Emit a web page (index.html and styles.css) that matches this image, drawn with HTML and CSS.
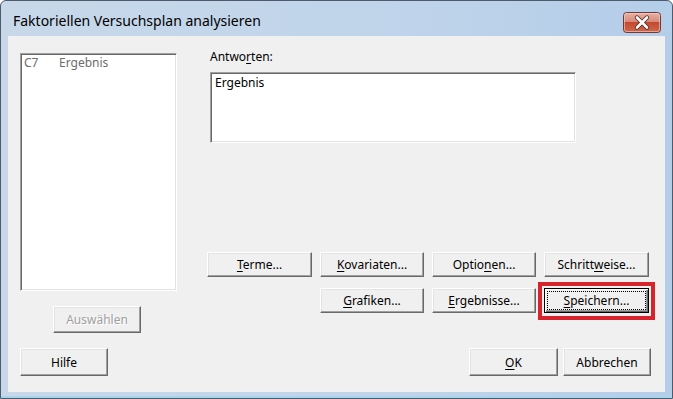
FILE: index.html
```html
<!DOCTYPE html>
<html lang="de">
<head>
    <meta charset="UTF-8">
    <title>Faktoriellen Versuchsplan analysieren</title>
    <link rel="stylesheet" href="styles.css">
</head>
<body>
    <div class="window">
        <div class="titlebar">
            <span class="title">Faktoriellen Versuchsplan analysieren</span>
            <span class="close-btn">
                <svg width="38" height="21" viewBox="0 0 38 21">
                    <defs>
                        <linearGradient id="closeGrad" x1="0" y1="0" x2="0" y2="1">
                            <stop offset="0" stop-color="#e8b3a8"/>
                            <stop offset="0.45" stop-color="#d68b7a"/>
                            <stop offset="0.5" stop-color="#c4492f"/>
                            <stop offset="1" stop-color="#cf6a4e"/>
                        </linearGradient>
                    </defs>
                    <rect x="0.5" y="0.5" width="37" height="20" rx="3" fill="url(#closeGrad)" stroke="#6f3a33"/>
                    <rect x="1.5" y="1.5" width="35" height="18" rx="2" fill="none" stroke="#f3d0c8" stroke-opacity="0.6"/>
                    <path d="M14 5.5 L24 15.5 M24 5.5 L14 15.5" stroke="#5a2a24" stroke-width="4.4" stroke-linecap="round"/>
                    <path d="M14 5.5 L24 15.5 M24 5.5 L14 15.5" stroke="#ffffff" stroke-width="2.6" stroke-linecap="round"/>
                </svg>
            </span>
        </div>

        <div class="client">
            <div class="main">
                <div class="left-col">
                    <div class="listbox">
                        <div class="list-row"><span class="col-id">C7</span><span>Ergebnis</span></div>
                    </div>
                    <button class="btn btn-select" disabled>Auswählen</button>
                </div>

                <div class="right-col">
                    <div class="field-label">Antwo<u>r</u>ten:</div>
                    <div class="textbox">Ergebnis</div>

                    <div class="btn-grid">
                        <button class="btn"><u>T</u>erme...</button>
                        <button class="btn"><u>K</u>ovariaten...</button>
                        <button class="btn">Optio<u>n</u>en...</button>
                        <button class="btn">Schritt<u>w</u>eise...</button>
                        <button class="btn col-2"><u>G</u>rafiken...</button>
                        <button class="btn"><u>E</u>rgebnisse...</button>
                        <div class="highlight-cell">
                            <button class="btn btn-default"><span class="focus-ring"><u>S</u>peichern...</span></button>
                            <span class="highlight"></span>
                        </div>
                    </div>
                </div>
            </div>

            <div class="footer">
                <button class="btn btn-footer">Hilfe</button>
                <div class="footer-right">
                    <button class="btn btn-ok"><u>O</u>K</button>
                    <button class="btn btn-footer">Abbrechen</button>
                </div>
            </div>
        </div>
    </div>
</body>
</html>
```

FILE: styles.css
```css
body {
    margin: 0;
    background: #ffffff;
    font-family: "Noto Sans", "Open Sans", sans-serif;
    font-size: 12px;
    color: #000;
}
.window {
    width: 673px;
    height: 399px;
    box-sizing: border-box;
    padding: 0 7px 7px;
    border: 1px solid #4e5b6b;
    border-radius: 6px 6px 0 0;
    background: linear-gradient(to right, #c8d8ea 0%, #bfd4ea 60%, #b4cde9 100%);
    box-shadow: inset 0 -2px 0 #a9d4ee;
}
.titlebar {
    height: 35px;
    display: flex;
    align-items: flex-start;
}
.title {
    margin: 10px 0 0 5px;
    font-size: 14px;
    line-height: 20px;
    color: #000;
}
.close-btn {
    margin: 11px 4px 0 auto;
    height: 21px;
}
.client {
    height: 356px;
    box-sizing: border-box;
    background: #f0f0f0;
    padding: 17px 14px 0 12px;
}
.main {
    display: flex;
    align-items: flex-start;
}
.left-col {
    width: 157px;
    display: flex;
    flex-direction: column;
}
.listbox {
    height: 238px;
    box-sizing: border-box;
    background: #fff;
    border: 1px solid;
    border-color: #a0a0a0 #ffffff #ffffff #a0a0a0;
    box-shadow: inset 1px 1px 0 #696969, inset -1px -1px 0 #e3e3e3;
    padding: 1px 3px;
    color: #6d6d6d;
}
.list-row {
    line-height: 16px;
    display: flex;
}
.col-id {
    width: 35px;
}
.btn {
    font-family: inherit;
    font-size: 12px;
    color: #000;
    background: #f0f0f0;
    border: 1px solid;
    border-color: #ffffff #696969 #696969 #ffffff;
    box-shadow: inset -1px -1px 0 #a0a0a0, inset 1px 1px 0 #e3e3e3;
    padding: 0;
    height: 25px;
    cursor: pointer;
}
.btn u {
    text-decoration-thickness: 1px;
    text-underline-offset: 2px;
}
.btn-select {
    width: 88px;
    height: 27px;
    margin: 15px 0 0 33px;
    color: #a0a0a0;
    text-shadow: 1px 1px 0 #ffffff;
}
.right-col {
    margin-left: 30px;
    flex: 1;
}
.field-label {
    margin: -4px 0 0 3px;
    line-height: 16px;
}
.field-label u {
    text-underline-offset: 2px;
}
.textbox {
    width: 366px;
    height: 71px;
    box-sizing: border-box;
    margin: 7px 0 0 3px;
    background: #fff;
    border: 1px solid;
    border-color: #a0a0a0 #ffffff #ffffff #a0a0a0;
    box-shadow: inset 1px 1px 0 #696969, inset -1px -1px 0 #e3e3e3;
    padding: 2px 4px;
    line-height: 16px;
}
.btn-grid {
    margin-top: 109px;
    display: grid;
    grid-template-columns: 105px 104px 104px 105px;
    column-gap: 8px;
    row-gap: 11px;
}
.btn-grid .btn {
    width: 100%;
}
.col-2 {
    grid-column: 2;
}
.highlight-cell {
    position: relative;
}
.btn-default {
    border-color: #000;
    box-shadow: inset 1px 1px 0 #ffffff, inset -1px -1px 0 #696969, inset -2px -2px 0 #a0a0a0;
}
.focus-ring {
    display: flex;
    align-items: center;
    justify-content: center;
    margin: 0 3px;
    height: 17px;
    outline: 1px dotted #000;
}
.highlight {
    position: absolute;
    left: -6px;
    top: -6px;
    right: -6px;
    bottom: -7px;
    border: 4px solid #d6232c;
    box-sizing: border-box;
    pointer-events: none;
}
.footer {
    margin-top: 15px;
    display: flex;
    justify-content: space-between;
}
.btn-footer {
    width: 88px;
    height: 28px;
}
.btn-ok {
    width: 89px;
    height: 28px;
}
.footer-right {
    display: flex;
    gap: 5px;
}
```
